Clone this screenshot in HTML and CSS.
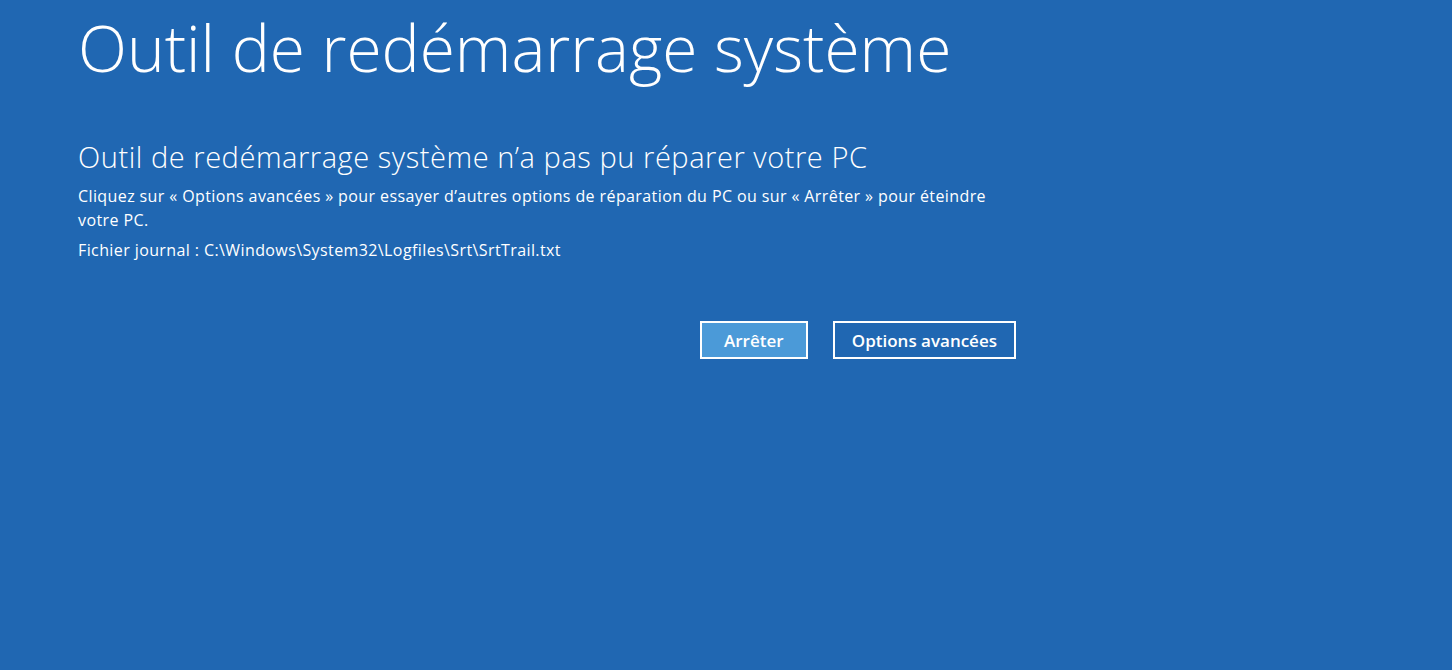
FILE: index.html
```html
<!DOCTYPE html>
<html lang="fr">
<head>
    <meta charset="UTF-8">
    <title>Outil de redémarrage système</title>
    <link rel="stylesheet" href="styles.css">
</head>
<body>
    <div class="screen">
        <h1 class="page-title">Outil de redémarrage système</h1>

        <div class="content">
            <h2 class="status-title">Outil de redémarrage système n’a pas pu réparer votre PC</h2>
            <p class="status-text">Cliquez sur « Options avancées » pour essayer d’autres options de réparation du PC ou sur « Arrêter » pour éteindre votre PC.</p>
            <p class="status-text log">Fichier journal : C:\Windows\System32\Logfiles\Srt\SrtTrail.txt</p>

            <div class="actions">
                <button class="btn btn-primary">Arrêter</button>
                <button class="btn">Options avancées</button>
            </div>
        </div>
    </div>
</body>
</html>
```

FILE: styles.css
```css
body {
    margin: 0;
    height: 100vh;
    background-color: #2067b2;
    color: #fff;
    font-family: 'Open Sans', 'Noto Sans', sans-serif;
    overflow: hidden;
}

.screen {
    padding: 3px 0 0 78px;
}

.page-title {
    margin: 0;
    font-size: 64px;
    font-weight: 300;
    line-height: 90px;
}

.content {
    width: 938px;
    margin-top: 47px;
}

.status-title {
    margin: 0;
    font-size: 29px;
    font-weight: 300;
    line-height: 34px;
    letter-spacing: 0.55px;
}

.status-text {
    margin: 10px 0 0;
    width: 930px;
    font-size: 16px;
    line-height: 24px;
    letter-spacing: 0.4px;
}

.log {
    margin-top: 6px;
}

.actions {
    display: flex;
    justify-content: flex-end;
    gap: 25px;
    margin-top: 59px;
}

.btn {
    height: 38px;
    padding: 0 17px;
    background-color: transparent;
    color: #fff;
    border: 2px solid #fff;
    font-family: inherit;
    font-size: 17px;
    font-weight: 600;
    cursor: pointer;
}

.btn-primary {
    width: 108px;
    background-color: #4b9ad8;
}
```
